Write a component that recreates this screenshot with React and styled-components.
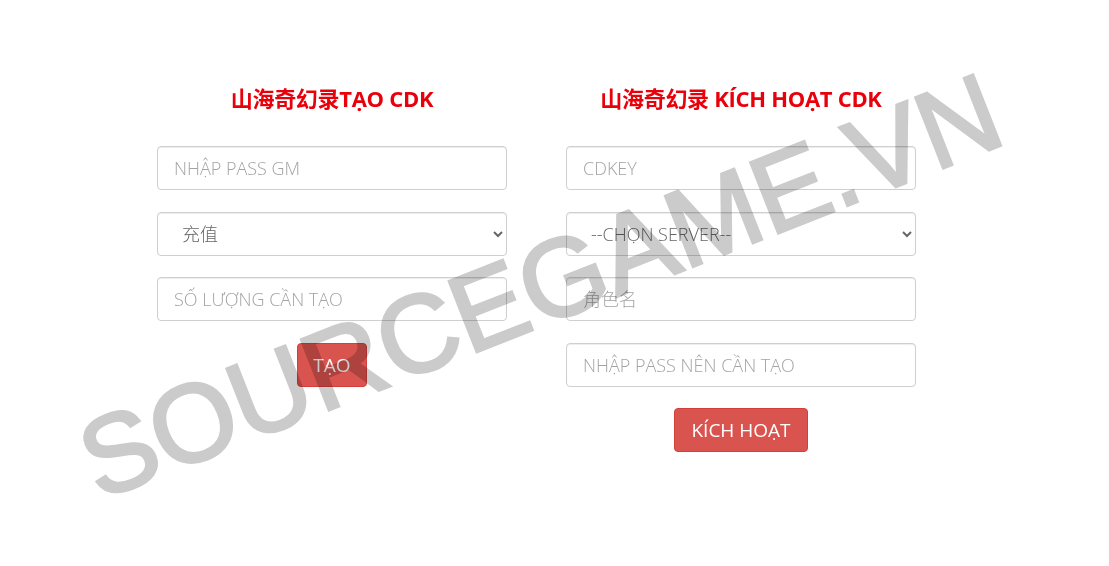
import React from 'react';
import styled, {createGlobalStyle} from 'styled-components';

const GlobalStyle = createGlobalStyle`
  html, body {
    margin: 0;
    padding: 0;
    background: #ffffff;
  }
  body {
    font-family: "Open Sans", "Noto Sans CJK SC", sans-serif;
  }
`;

const Page = styled.div`
  position: relative;
  width: 1109px;
  height: 566px;
  overflow: hidden;
  background: #ffffff;
`;

const Columns = styled.div`
  display: flex;
  gap: 59px;
  padding: 83px 0 0 157px;
`;

const Column = styled.form`
  width: 350px;
  display: flex;
  flex-direction: column;
  align-items: center;
`;

const Title = styled.h3`
  margin: 0 0 33px;
  height: 30px;
  line-height: 30px;
  font-family: "Open Sans", "Noto Sans CJK SC", sans-serif;
  font-size: 22px;
  font-weight: 700;
  color: #e8000b;
  white-space: nowrap;
  letter-spacing: -0.3px;
`;

const Fields = styled.div`
  width: 100%;
  display: flex;
  flex-direction: column;
  gap: 21.5px;
`;

const Input = styled.input`
  box-sizing: border-box;
  width: 100%;
  height: 44px;
  padding: 0 16px;
  border: 1px solid #cfcfcf;
  border-radius: 4px;
  box-shadow: inset 0 1px 1px rgba(0, 0, 0, 0.075);
  font-family: "Open Sans", "Noto Sans CJK SC", sans-serif;
  font-size: 18px;
  font-weight: 300;
  color: #555;
  background: #fff;
  outline: none;

  &::placeholder {
    color: #a3a3a3;
    font-weight: 300;
  }
`;

const Select = styled.select`
  box-sizing: border-box;
  width: 100%;
  height: 44px;
  padding: 0 20px;
  border: 1px solid #cfcfcf;
  border-radius: 4px;
  box-shadow: inset 0 1px 1px rgba(0, 0, 0, 0.075);
  font-family: "Open Sans", "Noto Sans CJK SC", sans-serif;
  font-size: 18px;
  font-weight: 300;
  color: #666;
  background: #fff;
  outline: none;
`;

const Submit = styled.button`
  align-self: center;
  height: 44px;
  padding: 0 ${(p) => p.$pad}px;
  border: 1px solid #d43f3a;
  border-radius: 4px;
  background: #d9534f;
  color: #ffffff;
  font-family: "Open Sans", sans-serif;
  font-size: 19px;
  font-weight: 400;
  cursor: pointer;
`;

// watermark laid over the forms
const Watermark = styled.div`
  position: absolute;
  left: 540px;
  top: 286px;
  transform: translate(-50%, -50%) rotate(-21.5deg);
  font-family: "Liberation Sans", Arial, sans-serif;
  font-size: 110px;
  font-weight: 400;
  line-height: 1;
  color: #cbcbcb;
  -webkit-text-stroke: 3px #cbcbcb;
  mix-blend-mode: multiply;
  white-space: nowrap;
  pointer-events: none;
  user-select: none;
`;

function App() {
  return (
      <Page>
        <GlobalStyle/>
        <Columns>
          <Column>
            <Title>山海奇幻录TẠO CDK</Title>
            <Fields>
              <Input type="password" placeholder="NHẬP PASS GM"/>
              <Select defaultValue="recharge">
                <option value="recharge">充值</option>
              </Select>
              <Input type="text" placeholder="SỐ LƯỢNG CẦN TẠO"/>
              <Submit type="button" $pad={15}>TẠO</Submit>
            </Fields>
          </Column>
          <Column>
            <Title>山海奇幻录 KÍCH HOẠT CDK</Title>
            <Fields>
              <Input type="text" placeholder="CDKEY"/>
              <Select defaultValue="">
                <option value="">--CHỌN SERVER--</option>
              </Select>
              <Input type="text" placeholder="角色名"/>
              <Input type="password" placeholder="NHẬP PASS NÊN CẦN TẠO"/>
              <Submit type="button" $pad={16}>KÍCH HOẠT</Submit>
            </Fields>
          </Column>
        </Columns>
        <Watermark>SOURCEGAME.VN</Watermark>
      </Page>
  );
}

export default App;
